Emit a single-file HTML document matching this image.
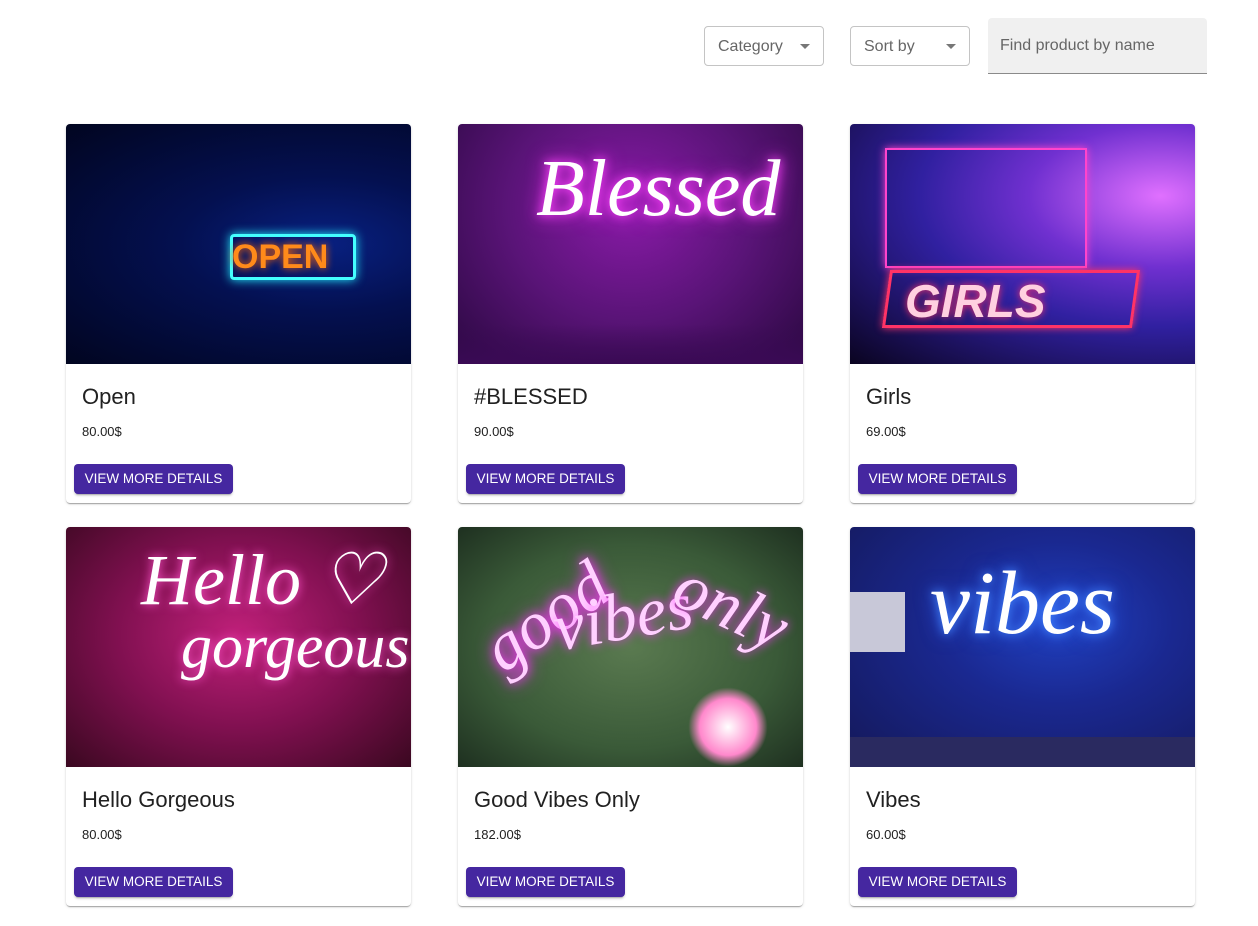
<!DOCTYPE html>
<html><head><meta charset="utf-8"><style>
*{box-sizing:border-box;margin:0;padding:0}
body{width:1258px;height:926px;background:#fff;font-family:"Liberation Sans",Arial,sans-serif;position:relative;overflow:hidden;color:#212121}
.sel{position:absolute;top:26px;height:40px;border:1px solid #c4c4c4;border-radius:4px;font-size:16px;color:#666;padding:11px 0 0 13px}
.sel:after{content:"";position:absolute;right:13px;top:17px;border-left:5px solid transparent;border-right:5px solid transparent;border-top:5px solid #777}
.search{position:absolute;left:988px;top:18px;width:219px;height:56px;background:#f0f0f0;border-bottom:1px solid #8a8a8a;border-radius:4px 4px 0 0;font-size:16px;color:#666;padding:19px 0 0 12px}
.card{position:absolute;width:345px;height:379px;border-radius:4px;background:#fff;box-shadow:0 2px 1px -1px rgba(0,0,0,.2),0 1px 1px rgba(0,0,0,.14),0 1px 3px rgba(0,0,0,.12);overflow:hidden}
.img{height:240px;position:relative;overflow:hidden}
.t{position:absolute;left:16px;top:260px;font-size:22px}
.p{position:absolute;left:16px;top:300px;font-size:13px}
.b{position:absolute;left:8px;top:340px;width:159px;height:30px;background:#4527a0;color:#fff;border-radius:4px;font-size:13.5px;text-align:center;line-height:30px;box-shadow:0 3px 1px -2px rgba(0,0,0,.2),0 2px 2px rgba(0,0,0,.14)}
.neon{position:absolute;font-family:"Liberation Serif",serif;font-style:italic;color:#fff}
</style></head><body>
<div class="sel" style="left:704px;width:120px">Category</div>
<div class="sel" style="left:850px;width:120px">Sort by</div>
<div class="search">Find product by name</div>

<div class="card" style="left:66px;top:124px"><div class="img" style="background:radial-gradient(ellipse at 75% 50%,#082080 0%,#041050 40%,#010520 100%)">
<div style="position:absolute;left:164px;top:110px;width:126px;height:46px;border:3px solid #4ff;border-radius:4px;box-shadow:0 0 10px #2ef"></div>
<div style="position:absolute;left:166px;top:114px;font-size:34px;font-weight:bold;color:#ff8a1a;text-shadow:0 0 8px #f60">OPEN</div></div>
<div class="t">Open</div><div class="p">80.00$</div><div class="b">VIEW MORE DETAILS</div></div>

<div class="card" style="left:458px;top:124px"><div class="img" style="background:radial-gradient(ellipse at 50% 35%,#8a1aa8 0%,#5a1478 50%,#2a0840 100%)">
<div class="neon" style="left:78px;top:20px;font-size:80px;text-shadow:0 0 10px #f4f,0 0 20px #e3e">Blessed</div>
<div style="position:absolute;left:0;bottom:0;width:345px;height:40px;background:linear-gradient(transparent,#3a0a55)"></div></div>
<div class="t">#BLESSED</div><div class="p">90.00$</div><div class="b">VIEW MORE DETAILS</div></div>

<div class="card" style="left:850px;top:124px"><div class="img" style="background:radial-gradient(ellipse at 90% 30%,#e070ff 0%,#7030d0 30%,#3020a0 55%,#0a0420 100%)">
<div style="position:absolute;left:35px;top:24px;width:202px;height:120px;border:2px solid #f4c;box-shadow:0 0 8px #f4c"></div>
<div style="position:absolute;left:36px;top:146px;width:250px;height:58px;border:3px solid #f36;box-shadow:0 0 8px #f36;transform:skewX(-8deg)"></div>
<div class="neon" style="left:55px;top:150px;font-size:46px;font-family:'Liberation Sans',sans-serif;font-weight:bold;color:#ffd0e0;text-shadow:0 0 8px #f36">GIRLS</div></div>
<div class="t">Girls</div><div class="p">69.00$</div><div class="b">VIEW MORE DETAILS</div></div>

<div class="card" style="left:66px;top:527px"><div class="img" style="background:radial-gradient(ellipse at 50% 45%,#c0207a 0%,#801050 50%,#3a0820 100%)">
<div class="neon" style="left:75px;top:10px;font-size:72px;text-shadow:0 0 10px #f5c">Hello ♡</div>
<div class="neon" style="left:115px;top:85px;font-size:62px;text-shadow:0 0 10px #f5c">gorgeous</div></div>
<div class="t">Hello Gorgeous</div><div class="p">80.00$</div><div class="b">VIEW MORE DETAILS</div></div>

<div class="card" style="left:458px;top:527px"><div class="img" style="background:radial-gradient(ellipse at 50% 50%,#5a7a50 0%,#3a5a38 60%,#1e3020 100%)">
<div class="neon" style="left:20px;top:50px;font-size:68px;color:#ffd0ff;text-shadow:0 0 10px #f3f,0 0 18px #f3f;transform:rotate(-35deg)">good</div>
<div class="neon" style="left:95px;top:50px;font-size:68px;color:#ffd0ff;text-shadow:0 0 10px #f3f;transform:rotate(-10deg)">vibes</div>
<div class="neon" style="left:215px;top:40px;font-size:68px;color:#ffd0ff;text-shadow:0 0 10px #f3f;transform:rotate(25deg)">only</div>
<div style="position:absolute;left:230px;top:160px;width:80px;height:80px;border-radius:50%;background:radial-gradient(#fff,#f8c 50%,transparent 70%)"></div></div>
<div class="t">Good Vibes Only</div><div class="p">182.00$</div><div class="b">VIEW MORE DETAILS</div></div>

<div class="card" style="left:850px;top:527px"><div class="img" style="background:radial-gradient(ellipse at 60% 40%,#2040c0 0%,#1a2890 40%,#141858 100%)">
<div style="position:absolute;left:0;top:65px;width:55px;height:60px;background:#c8c8d8"></div>
<div class="neon" style="left:80px;top:25px;font-size:90px;text-shadow:0 0 10px #48f,0 0 20px #36f">vibes</div>
<div style="position:absolute;left:0;bottom:0;width:345px;height:30px;background:#2a2a60"></div></div>
<div class="t">Vibes</div><div class="p">60.00$</div><div class="b">VIEW MORE DETAILS</div></div>
</body></html>
